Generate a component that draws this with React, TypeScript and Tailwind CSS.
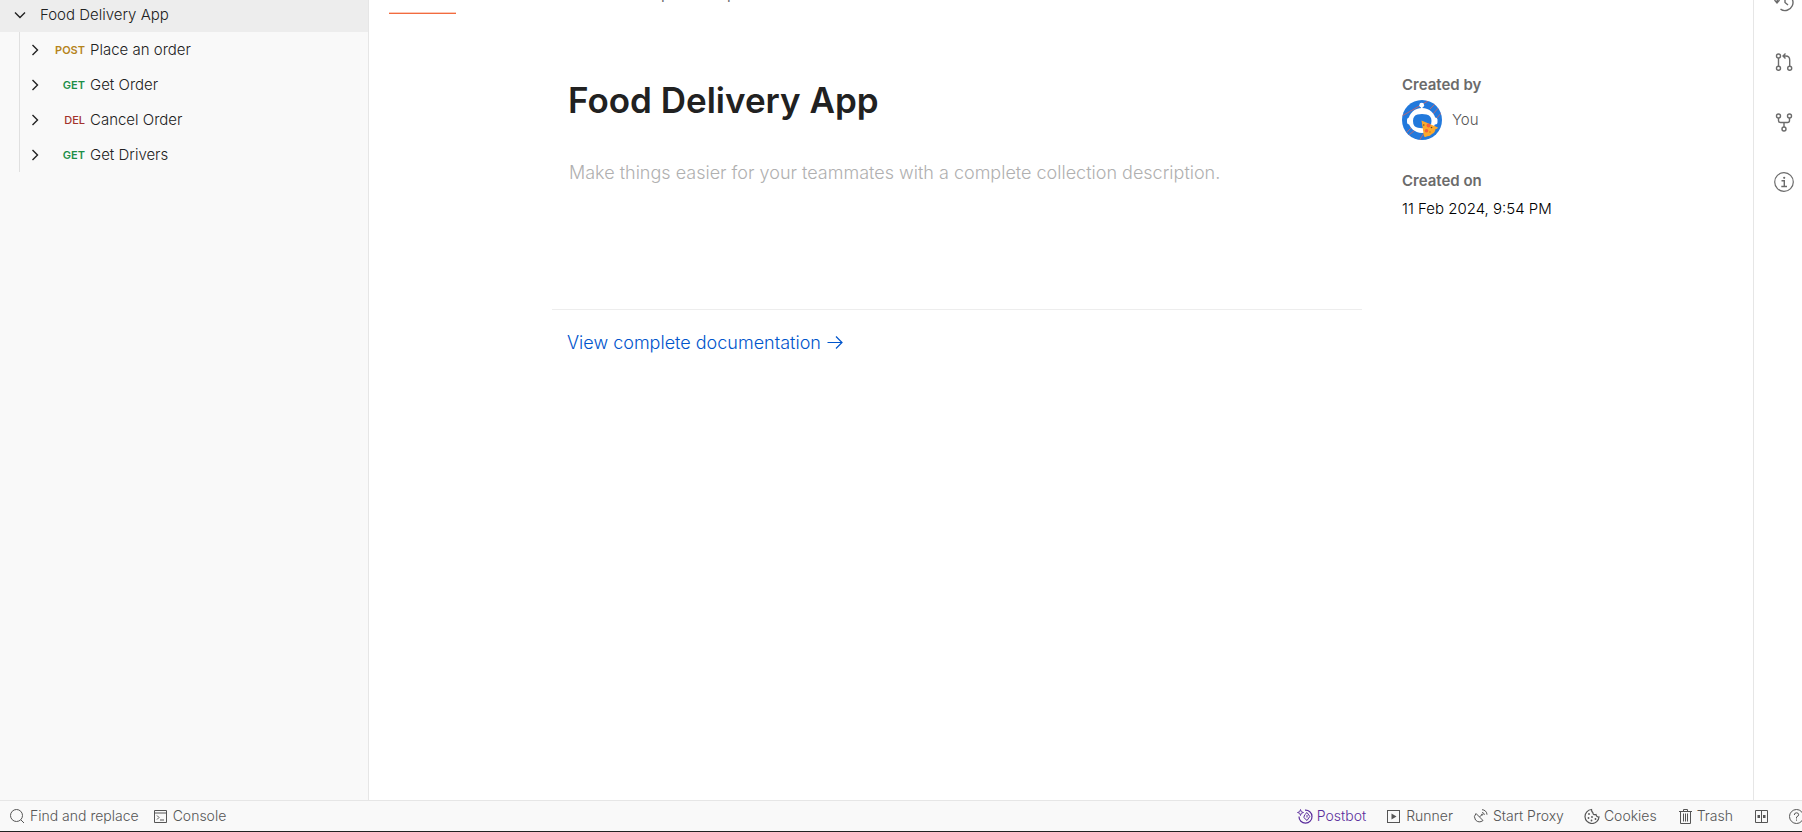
import type { ReactNode } from "react";

type RequestRow = { method: string; color: string; name: string };

const requests: RequestRow[] = [
  { method: "POST", color: "font-semibold text-[#b5841c]", name: "Place an order" },
  { method: "GET", color: "font-semibold text-[#1c8f47]", name: "Get Order" },
  { method: "DEL", color: "font-medium text-[#a3322c]", name: "Cancel Order" },
  { method: "GET", color: "font-semibold text-[#1c8f47]", name: "Get Drivers" },
];

function Icon({ size = 16, children }: { size?: number; children: ReactNode }) {
  return (
    <svg
      width={size}
      height={size}
      viewBox={`0 0 ${size} ${size}`}
      fill="none"
      stroke="currentColor"
      strokeWidth="1.2"
      className="shrink-0"
      aria-hidden="true"
    >
      {children}
    </svg>
  );
}

function Sidebar() {
  return (
    <aside className="w-[369px] shrink-0 border-r border-[#e6e6e6] bg-[#f9f9f9] font-light text-[#212121]">
      <button className="flex h-8 w-full items-center bg-[#ededed] pl-3 text-left">
        <Icon>
          <path d="M3 4.500 8 9.500 13 4.500" strokeWidth="1.4" />
        </Icon>
        <span className="-mt-0.5 pl-3">Food Delivery App</span>
      </button>
      <ul className="ml-[19px] border-l border-[#e0e0e0]">
        {requests.map((r) => (
          <li key={r.name}>
            <button className="flex h-[35px] w-full items-center pl-[7px] text-left">
              <Icon>
                <path d="M5.500 3 10.500 8 5.500 13" strokeWidth="1.4" />
              </Icon>
              <span className={`w-[42px] pt-0.5 text-right text-[11px] ${r.color}`}>{r.method}</span>
              <span className="pt-0.5 pl-[5px]">{r.name}</span>
            </button>
          </li>
        ))}
      </ul>
    </aside>
  );
}

function Avatar() {
  return (
    <svg width="40" height="40" viewBox="0 0 40 40" aria-hidden="true">
      <defs>
        <clipPath id="avatar-disc">
          <circle cx="20" cy="20" r="20" />
        </clipPath>
      </defs>
      <g clipPath="url(#avatar-disc)">
        <rect width="40" height="40" fill="#2279dc" />
        <g stroke="#d9655f" strokeWidth="0.8">
          <path d="M0 16 26 1M28 9 35 2M31 14 38 6M34 19 40 12M4 33 10 27M7 35 13 30M17 41 22 33" />
        </g>
        <ellipse cx="20" cy="20.5" rx="13.5" ry="12.5" fill="#fff" />
        <rect x="5" y="17.500" width="5" height="7" rx="2.500" fill="#fff" />
        <rect x="30.500" y="17.500" width="5" height="7" rx="2.500" fill="#fff" />
        <circle cx="19.700" cy="5.200" r="2.400" fill="#fff" />
        <path d="M19 6h1.500v4H19z" fill="#fff" />
        <path d="M15.500 14.500Q20 13.300 24.500 14.500Q29.500 15.500 29.500 21Q29.500 27 24 27.800Q20 28.500 16 27.800Q11 27 11 21Q11 15.500 15.500 14.500Z" fill="#2279dc" />
        <path d="M19.500 20.500 36 27.500Q35 29.500 33.500 29Q33 33 30 34Q28 36.500 25 36.300Q23.500 37.500 22 36.500Z" fill="#fba92c" />
        <circle cx="26.500" cy="25.500" r="2" fill="#f4613c" />
        <circle cx="24.500" cy="30.800" r="1.800" fill="#f4613c" />
        <circle cx="29.500" cy="27.500" r="0.800" fill="#5a4a1c" />
        <circle cx="21.800" cy="25" r="0.700" fill="#5a4a1c" />
        <circle cx="28" cy="32" r="0.700" fill="#c56a1c" />
      </g>
    </svg>
  );
}

function Overview() {
  return (
    <main className="min-w-0 flex-1 bg-white">
      <nav className="flex h-[14px] items-end gap-[30px] overflow-hidden pl-5 text-[#6b6b6b]">
        <a href="#overview" className="border-b border-[#f26b3f] pb-[9px] leading-5 shadow-[inset_0_-1px_0_#fbc9b8]">Overview</a>
        <a href="#authorization" className="pb-[10px] leading-5">Authorization</a>
        <a href="#pre-request" className="pb-[10px] leading-5">Pre-request Script</a>
      </nav>
      <div className="mx-auto flex max-w-[1018px] gap-10">
        <section className="min-w-0 flex-1">
          <h1 className="px-4 pt-[62px] text-[35px] leading-[48px] font-semibold text-[#212121]">Food Delivery App</h1>
          <p className="h-[185px] px-4 pt-[37px] pl-[17px] text-[18px] leading-6 font-light text-[#b0b0b0]">
            Make things easier for your teammates with a complete collection description.
          </p>
          <div className="border-t border-[#ededed] px-[15px] pt-5">
            <a href="#documentation" className="inline-flex items-center gap-[6px] text-[18px] leading-[26px] font-light text-[#0055cc]">
              View complete documentation
              <Icon size={16}>
                <path d="M0.500 7.500H15M9 1.500 15 7.500 9 13.500" />
              </Icon>
            </a>
          </div>
        </section>
        <aside className="w-[168px] shrink-0 pt-[61px]">
          <h2 className="leading-5 font-semibold text-[#6b6b6b]">Created by</h2>
          <div className="flex items-center gap-[10px] pt-[5px] font-light text-[#555555]">
            <Avatar />
            You
          </div>
          <h2 className="pt-[31px] leading-5 font-semibold text-[#6b6b6b]">Created on</h2>
          <p className="pt-2 leading-5 font-light whitespace-nowrap text-black">11 Feb 2024, 9:54 PM</p>
        </aside>
      </div>
    </main>
  );
}

function ToolRail() {
  return (
    <aside className="flex w-[49px] shrink-0 flex-col gap-10 overflow-hidden border-l border-[#e6e6e6] bg-white pl-5 text-[#6b6b6b]">
      <button aria-label="Changelog" className="-mt-2">
        <Icon size={20}>
          <path d="M3 10a8 8 0 1 1 3.500 7.200M0.500 8 3 11 5.500 8M11 5V10.500L14 13" strokeWidth="1.4" />
        </Icon>
      </button>
      <button aria-label="Pull requests">
        <Icon size={20}>
          <circle cx="4.500" cy="4" r="2" strokeWidth="1.4" />
          <circle cx="4.500" cy="16.300" r="2" strokeWidth="1.4" />
          <circle cx="15.700" cy="16.300" r="2" strokeWidth="1.4" />
          <path d="M4.500 6V14.300M15.700 14.300V8Q15.700 4 11.700 4H9M11.500 1.500 9 4 11.500 6.500" strokeWidth="1.4" />
        </Icon>
      </button>
      <button aria-label="Forks">
        <Icon size={20}>
          <circle cx="4.500" cy="4" r="2" strokeWidth="1.4" />
          <circle cx="15.500" cy="4" r="2" strokeWidth="1.4" />
          <circle cx="10" cy="17" r="2" strokeWidth="1.4" />
          <path d="M4.500 6V8.500Q4.500 10.500 6.500 10.500H13.500Q15.500 10.500 15.500 8.500V6M10 10.500V15" strokeWidth="1.4" />
        </Icon>
      </button>
      <button aria-label="Information">
        <Icon size={20}>
          <circle cx="10" cy="10" r="9.300" />
          <path d="M7.500 8.700H10.300V14.500M7.300 14.500H13" strokeWidth="1.4" />
          <circle cx="10.200" cy="5.800" r="1.100" fill="currentColor" stroke="none" />
        </Icon>
      </button>
    </aside>
  );
}

function FooterButton({ label, accent = false, children }: { label: string; accent?: boolean; children: ReactNode }) {
  return (
    <button className={`flex items-center gap-1 whitespace-nowrap ${accent ? "text-[#5a2d9c]" : ""}`}>
      {children}
      <span className="pb-0.5">{label}</span>
    </button>
  );
}

function StatusBar() {
  return (
    <footer className="flex h-8 shrink-0 items-center justify-between overflow-hidden border-t border-b border-t-[#e6e6e6] border-b-[#222222] bg-[#f9f9f9] pl-[10px] text-[14px] font-light text-[#555555]">
      <div className="flex gap-[14px]">
        <FooterButton label="Find and replace">
          <Icon>
            <circle cx="6.500" cy="7.500" r="6" strokeWidth="1" />
            <path d="M10.800 11.800 14 15" strokeWidth="1" />
          </Icon>
        </FooterButton>
        <FooterButton label="Console">
          <Icon>
            <path d="M1.500 2.500H13.500V14.500H1.500ZM1.500 5H13.500M4 7.500 6 9.500 4 11.500M7 12H11" strokeWidth="1" />
          </Icon>
        </FooterButton>
      </div>
      <div className="flex gap-5">
        <FooterButton label="Postbot" accent>
          <Icon>
            <path d="M8 2.200A6.500 6.500 0 1 1 2 8.500" />
            <path d="M10 4.500 12.800 8.500 10 12.500 6.800 9.500Q7 6.500 10 4.500ZM10 7V9.500" strokeWidth="1" />
            <path d="M3.500 1.500 4.300 3.700 6.500 4.500 4.300 5.300 3.500 7.500 2.700 5.300 0.500 4.500 2.700 3.700Z" strokeWidth="0.900" />
          </Icon>
        </FooterButton>
        <FooterButton label="Runner">
          <Icon>
            <rect x="1.500" y="2.500" width="12" height="12" strokeWidth="1" />
            <path d="M5.500 5.500 10.500 8.500 5.500 11.500Z" fill="currentColor" stroke="none" />
          </Icon>
        </FooterButton>
        <FooterButton label="Start Proxy">
          <Icon>
            <path d="M3 5.500Q0 8.500 2.500 12Q6 15.500 10 12.500ZM6.500 9 8.500 7" strokeWidth="1" />
            <circle cx="9" cy="6.700" r="0.900" fill="currentColor" stroke="none" />
            <path d="M9 4.500A2.500 2.500 0 0 1 11.300 7M9 1.700A5 5 0 0 1 14 6.700" strokeWidth="1" />
          </Icon>
        </FooterButton>
        <FooterButton label="Cookies">
          <Icon>
            <path d="M7.500 1.500A7 7 0 1 0 15 9Q12.500 9.300 12 6.500Q9 7.300 8.800 4.500Q7.500 3.500 7.500 1.500Z" />
            <g fill="currentColor" stroke="none">
              <circle cx="5" cy="6" r="0.900" />
              <circle cx="4.500" cy="10" r="0.900" />
              <circle cx="8" cy="9" r="0.900" />
              <circle cx="7.500" cy="12.500" r="0.900" />
              <circle cx="11.500" cy="11" r="0.900" />
            </g>
          </Icon>
        </FooterButton>
        <FooterButton label="Trash">
          <Icon>
            <path d="M2 3.500H15M6.500 3V1.500H10.500V3M3.500 3.500V15.500H13.500V3.500M6.500 5.500V13.500M8.500 5.500V13.500M10.500 5.500V13.500" strokeWidth="1" />
          </Icon>
        </FooterButton>
        <button aria-label="Two pane view">
          <Icon>
            <path d="M2.500 2.500H14.500V14.500H2.500ZM8.500 2.500V14.500" strokeWidth="1" />
            <path d="M4.500 7H7V10H4.500ZM10 7H12.500V10H10Z" fill="currentColor" stroke="none" />
          </Icon>
        </button>
        <button aria-label="Help" className="w-[13px] overflow-hidden">
          <Icon>
            <circle cx="7.500" cy="8.500" r="7" strokeWidth="1" />
            <path d="M5.300 7Q5.300 4.800 7.500 4.800Q9.700 4.800 9.700 6.800Q9.700 8 7.500 9V10.500M7.500 11.500V12.700" strokeWidth="1" />
          </Icon>
        </button>
      </div>
    </footer>
  );
}

export default function App() {
  return (
    <div className="flex h-screen flex-col overflow-hidden bg-white font-['Inter',sans-serif] text-[15px]">
      <div className="flex min-h-0 flex-1">
        <Sidebar />
        <Overview />
        <ToolRail />
      </div>
      <StatusBar />
    </div>
  );
}
